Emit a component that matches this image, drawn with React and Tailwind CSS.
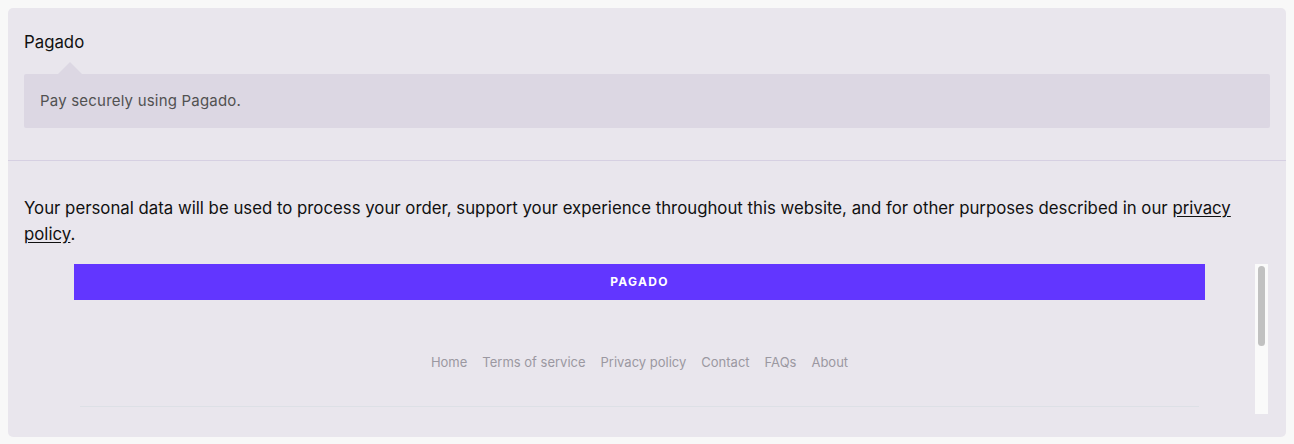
export default function App() {
  const links = ["Home", "Terms of service", "Privacy policy", "Contact", "FAQs", "About"];
  return (
    <div className="h-[444px] bg-[#f8f8f8] p-2" style={{ fontFamily: "Inter, 'Noto Sans', sans-serif" }}>
      <div className="rounded-[5px] bg-[#e9e6ed]">
        <div className="border-b border-[#d6d0e2] px-4 pb-8 pt-[22px]">
          <div className="text-[16.8px] leading-6 text-[#111]">Pagado</div>
          <div className="relative mt-5 rounded-[2px] bg-[#dcd7e3] px-4 py-[17px] text-[15px] leading-5 tracking-[0.2px] text-[#515151]">
            <svg className="absolute -top-3 left-[34px]" width="24" height="12" viewBox="0 0 24 12">
              <path d="M0 12 L12 0 L24 12 Z" fill="#dcd7e3" />
            </svg>
            Pay securely using Pagado.
          </div>
        </div>
        <div className="px-4 pb-[23px] pt-[34px]">
          <p className="text-[16.8px] leading-[26px] text-[#111]">
            Your personal data will be used to process your order, support your experience throughout this website, and for other purposes described in our{" "}
            <a href="#" className="underline underline-offset-2">privacy policy</a>.
          </p>
          <div className="mt-[17px] flex h-[150px]">
            <div className="flex-1 overflow-hidden">
              <div className="mx-[50px] flex h-9 items-center justify-center bg-[#6236ff] text-xs font-bold tracking-[1.3px] text-white">
                PAGADO
              </div>
              <div className="mt-[54px] flex justify-center gap-[15px] text-[13px] leading-4 text-[#9b98a1]">
                {links.map((l) => (
                  <a key={l} href="#">{l}</a>
                ))}
              </div>
              <div className="mx-[56px] mt-[36px] h-px bg-[#dde0e6]" />
            </div>
            <div className="mr-[2px] w-[13px] bg-[#fafafa] px-[3px] pt-[2px]">
              <div className="h-[80px] rounded-full bg-[#c1c1c1]" />
            </div>
          </div>
        </div>
      </div>
    </div>
  );
}
